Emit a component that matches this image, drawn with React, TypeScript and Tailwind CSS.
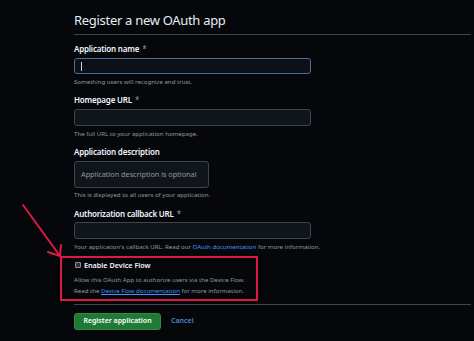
import React from "react";

const font = { fontFamily: '"Noto Sans", "Open Sans", sans-serif' };

function Label({ children, req }: { children: React.ReactNode; req?: boolean }) {
  return (
    <div className="text-[8px] leading-[10px] font-semibold tracking-[-0.2px] text-[#f0f6fc]">
      {children}
      {req && <span className="ml-[3px] text-[#9198a1] font-normal">*</span>}
    </div>
  );
}

function Help({ children, className = "" }: { children: React.ReactNode; className?: string }) {
  return <div className={"text-[6.1px] leading-[8px] text-[#9198a1] " + className}>{children}</div>;
}

export default function App() {
  return (
    <div
      className="relative w-[474px] h-[341px] overflow-hidden bg-[#05070b] pl-[74px] pr-[3px] pt-[11px]"
      style={font}
    >
      <div className="text-[13px] leading-[18px] tracking-[-0.3px] text-[#e6edf3]">
        Register a new OAuth app
      </div>
      <div className="mt-[5px] h-px bg-[#3d444d]" />

      <div className="mt-[9px]">
        <Label req>Application name</Label>
      </div>
      <div className="mt-[4px] h-[16px] w-[237px] rounded-[3px] border border-[#4a6d9c] bg-[#0d1117] flex items-center pl-[6px]">
        <div className="w-px h-[9px] bg-[#c9d1d9]" />
      </div>
      <Help className="mt-[4px]">Something users will recognize and trust.</Help>

      <div className="mt-[9px]">
        <Label req>Homepage URL</Label>
      </div>
      <div className="mt-[4px] h-[17px] w-[237px] rounded-[3px] border border-[#3d444d] bg-[#10141b]" />
      <Help className="mt-[4px]">The full URL to your application homepage.</Help>

      <div className="mt-[9px]">
        <Label>Application description</Label>
      </div>
      <div className="mt-[4px] h-[27px] w-[135px] rounded-[3px] border border-[#3d444d] bg-[#10141b] flex items-center pl-[6px] text-[7.25px] text-[#9198a1]">
        Application description is optional
      </div>
      <Help className="mt-[3px]">This is displayed to all users of your application.</Help>

      <div className="mt-[10px]">
        <Label req>Authorization callback URL</Label>
      </div>
      <div className="mt-[3px] h-[17px] w-[237px] rounded-[3px] border border-[#3d444d] bg-[#10141b]" />
      <Help className="mt-[4px]">
        Your application's callback URL. Read our{" "}
        <span className="text-[#4493f8]">OAuth documentation</span> for more information.
      </Help>

      <div className="mt-[9px] flex items-center h-[10px] gap-[3px]">
        <div className="ml-px w-[6px] h-[6px] rounded-[1px] border border-[#8b949e] bg-[#2d333b]" />
        <div className="text-[7.2px] leading-[10px] font-semibold text-[#f0f6fc]">Enable Device Flow</div>
      </div>
      <Help className="mt-[6px]">Allow this OAuth App to authorize users via the Device Flow.</Help>
      <Help className="mt-[3px]">
        Read the{" "}
        <span className="text-[#4493f8] underline underline-offset-1">Device Flow documentation</span> for more
        information.
      </Help>

      <div className="mt-[9px] h-px bg-[#3d444d]" />

      <div className="mt-[8px] flex items-center gap-[10px]">
        <div className="h-[17px] w-[87px] rounded-[3px] border border-[#2f8a45] bg-[#1f7a35] flex items-center justify-center text-[7px] font-semibold text-white">
          Register application
        </div>
        <div className="text-[7px] font-semibold text-[#4f86d1]">Cancel</div>
      </div>

      <div className="absolute left-[60px] top-[256px] w-[198px] h-[45px] border-2 border-[#dc1a45]" />

      <svg className="absolute left-0 top-0" width="474" height="341" viewBox="0 0 474 341">
        <g stroke="#dc1a45" strokeWidth="2" fill="none" strokeLinecap="round">
          <line x1="23" y1="205" x2="60" y2="256" />
          <line x1="48" y1="252" x2="60" y2="256" />
          <line x1="61" y1="245" x2="60" y2="256" />
        </g>
      </svg>
    </div>
  );
}
